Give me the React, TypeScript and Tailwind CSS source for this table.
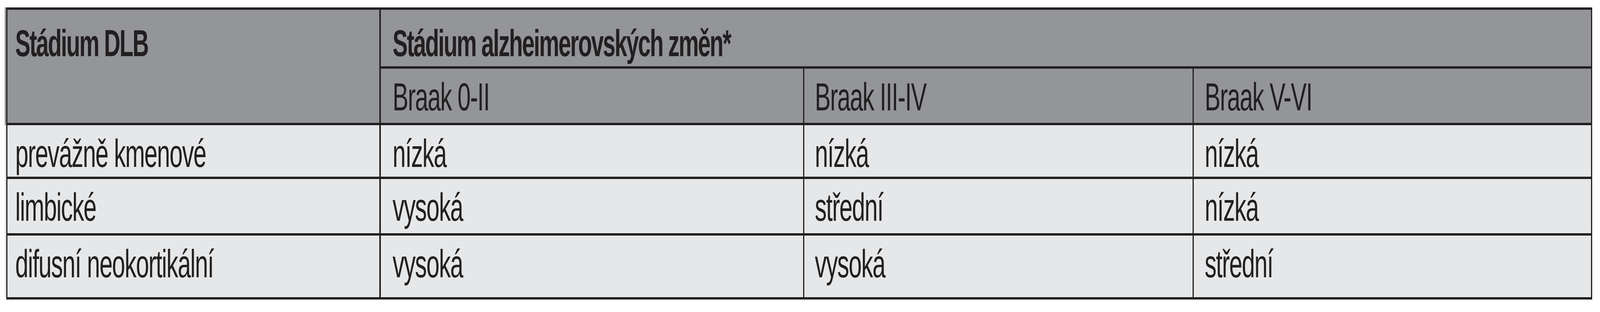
import React from "react";

const body = [
  ["prevážně kmenové", "nízká", "nízká", "nízká"],
  ["limbické", "vysoká", "střední", "nízká"],
  ["difusní neokortikální", "vysoká", "vysoká", "střední"],
];

const padCols = ["pl-[0.474vw]", "pl-[0.74vw]", "pl-[0.666vw]", "pl-[0.666vw]"];

function useScaleX() {
  const get = () => (typeof window === "undefined" ? 1 : window.innerWidth / 6753);
  const [sx, setSx] = React.useState(get);
  React.useEffect(() => {
    const on = () => setSx(get());
    window.addEventListener("resize", on);
    return () => window.removeEventListener("resize", on);
  }, []);
  return sx;
}

function T({ children, sx, bold }: { children: React.ReactNode; sx: number; bold?: boolean }) {
  return (
    <span
      className={
        bold
          ? "inline-block origin-left whitespace-nowrap text-[96px] leading-[96px] font-bold tracking-[-0.04em]"
          : "inline-block origin-left whitespace-nowrap text-[100px] leading-[100px] tracking-[-0.025em]"
      }
      style={{ transform: `scaleX(${sx})` }}
    >
      {children}
    </span>
  );
}

export default function App() {
  const sx = useScaleX();
  return (
    <div className="bg-white w-full h-[800px] overflow-hidden pt-[19px] pl-[0.2814vw] flex items-start font-['Liberation_Sans',Arial,sans-serif] text-[#231f20]">
      <div className="flex flex-col w-[0.1037vw] shrink-0">
        <div className="h-[302px] bg-[#949599]" />
        <div className="h-[441px] bg-[#e6e7e8]" />
      </div>
      <div className="grid shrink-0 grid-cols-[23.234vw_26.388vw_24.256vw_24.819vw] grid-rows-[145px_139px_132px_139px_158px] gap-y-[6px] gap-x-[0.0888vw] py-[6px] px-[0.0888vw] bg-[#231f20]">
        <div className="row-span-2 bg-[#949599] pl-[0.474vw] pt-[38px] overflow-visible">
          <T sx={sx} bold>Stádium DLB</T>
        </div>
        <div className="col-span-3 bg-[#949599] pl-[0.74vw] pt-[38px]">
          <T sx={sx} bold>Stádium alzheimerovských změn*</T>
        </div>
        <div className="bg-[#949599] pl-[0.74vw] pt-[22px]">
          <T sx={sx}>Braak 0-II</T>
        </div>
        <div className="bg-[#949599] pl-[0.666vw] pt-[22px]">
          <T sx={sx}>Braak III-IV</T>
        </div>
        <div className="bg-[#949599] pl-[0.666vw] pt-[22px]">
          <T sx={sx}>Braak V-VI</T>
        </div>
        {body.map((row, ri) =>
          row.map((cell, ci) => (
            <div key={`${ri}-${ci}`} className={`bg-[#e6e7e8] ${padCols[ci]} pt-[22px]`}>
              <T sx={sx}>{cell}</T>
            </div>
          ))
        )}
      </div>
    </div>
  );
}
